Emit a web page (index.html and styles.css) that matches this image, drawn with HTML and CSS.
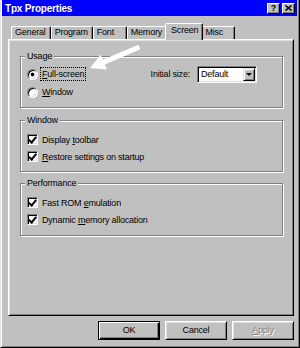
FILE: index.html
```html
<!DOCTYPE html>
<html lang="en">
<head>
  <meta charset="UTF-8">
  <title>Tpx Properties</title>
  <link rel="stylesheet" href="styles.css">
</head>
<body>
  <div class="window">
    <div class="titlebar">
      <span class="title">Tpx Properties</span>
      <span class="tbtn">?</span>
      <span class="tbtn close">
        <svg width="7" height="6" viewBox="0 0 7 6"><path d="M0.5 0.5 L6.5 5.5 M6.5 0.5 L0.5 5.5" stroke="#000" stroke-width="1.6"/></svg>
      </span>
    </div>

    <div class="content">
      <div class="tabs">
        <div class="tab">General</div>
        <div class="tab">Program</div>
        <div class="tab">Font</div>
        <div class="tab">Memory</div>
        <div class="tab active">Screen</div>
        <div class="tab">Misc</div>
      </div>

      <div class="panel">
        <fieldset class="group usage">
          <legend>Usage</legend>
          <div class="row">
            <span class="radio checked"></span>
            <span class="label focus"><u>F</u>ull-screen</span>
            <div class="size">
              <span>Initial size:</span>
              <div class="select">
                <span class="value">Default</span>
                <span class="drop"></span>
              </div>
            </div>
          </div>
          <div class="row">
            <span class="radio"></span>
            <span class="label"><u>W</u>indow</span>
          </div>
        </fieldset>

        <fieldset class="group win">
          <legend>Window</legend>
          <div class="row">
            <span class="check"></span>
            <span class="label">Display <u>t</u>oolbar</span>
          </div>
          <div class="row">
            <span class="check"></span>
            <span class="label"><u>R</u>estore settings on startup</span>
          </div>
        </fieldset>

        <fieldset class="group perf">
          <legend>Performance</legend>
          <div class="row">
            <span class="check"></span>
            <span class="label">Fast ROM <u>e</u>mulation</span>
          </div>
          <div class="row">
            <span class="check"></span>
            <span class="label">Dynamic <u>m</u>emory allocation</span>
          </div>
        </fieldset>
      </div>

      <div class="buttons">
        <div class="btn default">OK</div>
        <div class="btn">Cancel</div>
        <div class="btn disabled"><u>A</u>pply</div>
      </div>
    </div>

    <!-- the pointer drawn over the dialog -->
    <svg class="pointer" viewBox="88 43 56 30">
      <polygon points="90,68 100.6,54.8 102.8,59.8 138.5,44.7 140.5,49.3 104.8,64.4 106.9,69.5" fill="#fff"/>
    </svg>
  </div>
</body>
</html>
```

FILE: styles.css
```css
* {
  box-sizing: border-box;
}

body {
  margin: 0;
  font-family: "Liberation Sans", Arial, sans-serif;
  font-size: 9px;
  letter-spacing: -0.2px;
  color: #000;
  background-color: #c0c0c0;
}

.window {
  position: relative;
  width: 300px;
  height: 348px;
  background-color: #c0c0c0;
  border-left: 1px solid #dfdfdf;
  border-right: 1px solid #000;
  border-bottom: 1px solid #000;
  box-shadow: inset 1px 0 #fff, inset -1px -1px #808080;
  padding: 0 2px 1px 1px;
}

.titlebar {
  display: flex;
  align-items: center;
  height: 16px;
  padding: 0 2px 0 3px;
  background-color: #0000ff;
  color: #fff;
}

.title {
  flex: 1;
  font-size: 10px;
  font-weight: bold;
}

.tbtn {
  display: flex;
  align-items: center;
  justify-content: center;
  width: 13px;
  height: 11px;
  background-color: #c0c0c0;
  color: #000;
  font-weight: bold;
  font-size: 9px;
  line-height: 9px;
  border: 1px solid;
  border-color: #fff #000 #000 #fff;
  box-shadow: inset -1px -1px #808080;
}

.tbtn.close {
  margin-left: 2px;
}

.content {
  padding: 7px 3px 0 6px;
}

/* tabs */
.tabs {
  display: flex;
  height: 16px;
  padding-left: 3px;
}

.tab {
  margin-top: 3px;
  height: 13px;
  min-width: 34px;
  padding: 0 4px 0 3px;
  line-height: 11px;
  border: 1px solid #fff;
  border-right-color: #000;
  border-bottom: 0;
  border-radius: 2px 2px 0 0;
  box-shadow: inset -1px 0 #808080;
  white-space: nowrap;
}

.tab.active {
  position: relative;
  z-index: 1;
  margin: 0 -2px -1px;
  height: 17px;
  padding-top: 1px;
  padding-left: 5px;
  background-color: #c0c0c0;
}

.panel {
  height: 277px;
  border: 1px solid;
  border-color: #fff #000 #000 #fff;
  box-shadow: inset 1px 1px #dfdfdf, inset -1px -1px #808080;
  padding: 10px 10px 0 11px;
}

/* group boxes */
.group {
  margin: 0;
  min-width: 0;
  padding: 5px 25px 6px 6px;
  border: 1px solid #808080;
  box-shadow: inset 1px 1px #fff, 1px 1px #fff;
}

.group legend {
  padding: 0 2px;
  margin-left: -2px;
  line-height: 12px;
  background-color: #c0c0c0;
}

.group.usage {
  padding-top: 3px;
}

.group.win {
  margin-top: 6px;
}

.group.perf {
  margin-top: 5px;
  padding-bottom: 7px;
}

.row {
  display: flex;
  align-items: center;
  height: 17px;
}

.usage .row {
  height: 18px;
}

.label {
  margin-left: 3px;
  padding: 0 1px;
  line-height: 12px;
  white-space: nowrap;
}

.label.focus {
  outline: 1px dotted #000;
}

.radio,
.check {
  flex: none;
  width: 11px;
  height: 11px;
  background-color: #fff;
  border: 1px solid;
  border-color: #808080 #fff #fff #808080;
  box-shadow: inset 1px 1px #000, inset -1px -1px #dfdfdf;
}

.radio {
  border-radius: 50%;
}

.radio.checked {
  background: radial-gradient(circle, #000 0 1.6px, #fff 2.2px);
}

.check {
  display: flex;
  align-items: center;
  justify-content: center;
}

.check::after {
  content: "";
  width: 3px;
  height: 6px;
  margin-top: -2px;
  border: solid #000;
  border-width: 0 2px 2px 0;
  transform: rotate(40deg);
}

/* initial size dropdown */
.size {
  display: flex;
  align-items: center;
  margin-left: auto;
}

.select {
  display: flex;
  align-items: center;
  width: 60px;
  height: 17px;
  margin-left: 7px;
  padding: 1px;
  background-color: #fff;
  border: 1px solid;
  border-color: #808080 #fff #fff #808080;
  box-shadow: inset 1px 1px #000, inset -1px -1px #dfdfdf;
}

.select .value {
  padding-left: 2px;
}

.drop {
  display: flex;
  align-items: center;
  justify-content: center;
  width: 12px;
  height: 13px;
  margin-left: auto;
  background-color: #c0c0c0;
  border: 1px solid;
  border-color: #dfdfdf #000 #000 #dfdfdf;
  box-shadow: inset 1px 1px #fff, inset -1px -1px #808080;
}

.drop::after {
  content: "";
  border-left: 3px solid transparent;
  border-right: 3px solid transparent;
  border-top: 3px solid #000;
}

/* bottom buttons */
.buttons {
  display: flex;
  justify-content: flex-end;
  gap: 5px;
  margin-top: 5px;
}

.btn {
  width: 62px;
  height: 19px;
  line-height: 17px;
  text-align: center;
  border: 1px solid;
  border-color: #fff #000 #000 #fff;
  box-shadow: inset 1px 1px #dfdfdf, inset -1px -1px #808080;
}

.btn.default {
  border-color: #000;
  box-shadow: inset 1px 1px #fff, inset -1px -1px #000, inset -2px -2px #808080;
}

.btn.disabled {
  color: #808080;
  text-shadow: 1px 1px #fff;
}

.pointer {
  position: absolute;
  left: 87px;
  top: 43px;
  width: 56px;
  height: 30px;
}
```
